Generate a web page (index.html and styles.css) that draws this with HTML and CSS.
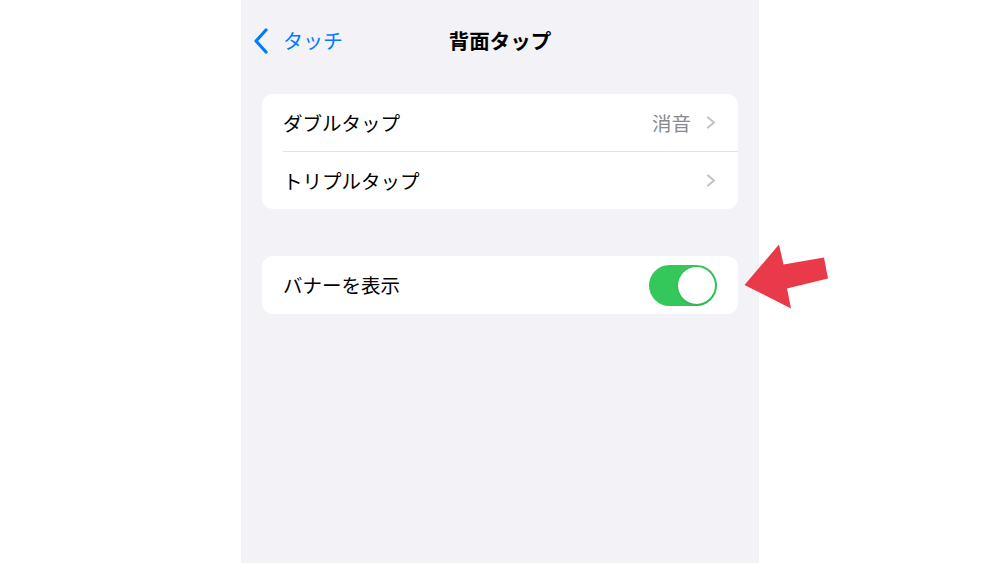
FILE: index.html
```html
<!DOCTYPE html>
<html lang="ja">
<head>
<meta charset="utf-8">
<title>背面タップ</title>
<link rel="stylesheet" href="styles.css">
</head>
<body>
<div class="phone">
  <header class="nav">
    <div class="back">
      <svg class="back-chev" width="16" height="26" viewBox="0 0 16 26"><path d="M13 2 L3 13 L13 24" fill="none" stroke="#007aff" stroke-width="3.2" stroke-linecap="round" stroke-linejoin="round"/></svg>
      <span class="back-label">タッチ</span>
    </div>
    <h1 class="title">背面タップ</h1>
    <div></div>
  </header>

  <section class="group first">
    <div class="row">
      <span class="label">ダブルタップ</span>
      <span class="value">消音</span>
      <svg class="chev" width="10" height="13" viewBox="0 0 10 13"><path d="M2 1.5 L8 6.5 L2 11.5" fill="none" stroke="#c4c4c7" stroke-width="2.2" stroke-linecap="round" stroke-linejoin="round"/></svg>
    </div>
    <div class="row">
      <span class="label">トリプルタップ</span>
      <svg class="chev" width="10" height="13" viewBox="0 0 10 13"><path d="M2 1.5 L8 6.5 L2 11.5" fill="none" stroke="#c4c4c7" stroke-width="2.2" stroke-linecap="round" stroke-linejoin="round"/></svg>
    </div>
  </section>

  <section class="group second">
    <div class="row toggle-row">
      <span class="label">バナーを表示</span>
      <span class="switch"><span class="knob"></span></span>
    </div>
  </section>
</div>

<svg class="arrow" width="1000" height="563" viewBox="0 0 1000 563">
  <polygon points="744.5,285 779,244.5 783.5,264.5 824,257.5 828,278.5 787,288.5 791,308.5" fill="#e83a48"/>
</svg>
</body>
</html>
```

FILE: styles.css
```css
html, body {
  margin: 0;
  padding: 0;
  background: #ffffff;
}
body {
  width: 1000px;
  height: 563px;
  overflow: hidden;
  position: relative;
  font-family: "Noto Sans CJK JP", "Noto Sans", sans-serif;
}
.phone {
  margin-left: 241px;
  width: 518px;
  height: 563px;
  background: #f2f2f7;
  box-sizing: border-box;
  padding: 0 21px;
}
.nav {
  height: 82px;
  margin: 0 -21px;
  padding: 0 12px;
  display: grid;
  grid-template-columns: 1fr auto 1fr;
  align-items: center;
}
.back {
  display: flex;
  align-items: center;
  gap: 14px;
  color: #007aff;
  font-size: 20px;
  margin-top: -1px;
}
.back-chev {
  display: block;
}
.back-label {
  line-height: 1;
}
.title {
  margin: 0;
  font-size: 20.5px;
  font-weight: 700;
  color: #000;
  line-height: 1;
  margin-top: -1px;
}
.group {
  background: #ffffff;
  border-radius: 11px;
  overflow: hidden;
}
.group.first {
  margin-top: 12px;
}
.group.second {
  margin-top: 47px;
}
.row {
  height: 57px;
  display: flex;
  align-items: center;
  padding: 0 22px 0 21px;
  font-size: 19.5px;
  color: #000;
}
.row + .row {
  border-top: 1px solid #e2e2e6;
  margin-left: 21px;
  padding-left: 0;
}
.label {
  flex: 1;
  line-height: 1;
}
.value {
  color: #8a8a8e;
  line-height: 1;
  margin-right: 15px;
}
.chev {
  display: block;
}
.toggle-row {
  height: 58px;
  padding-right: 21px;
}
.switch {
  width: 68px;
  height: 41px;
  border-radius: 21px;
  background: #34c759;
  position: relative;
  display: block;
}
.knob {
  position: absolute;
  right: 2px;
  top: 2px;
  width: 37px;
  height: 37px;
  border-radius: 50%;
  background: #ffffff;
  box-shadow: 0 1px 3px rgba(0,0,0,0.15);
}
.arrow {
  position: absolute;
  left: 0;
  top: 0;
  pointer-events: none;
}
```
